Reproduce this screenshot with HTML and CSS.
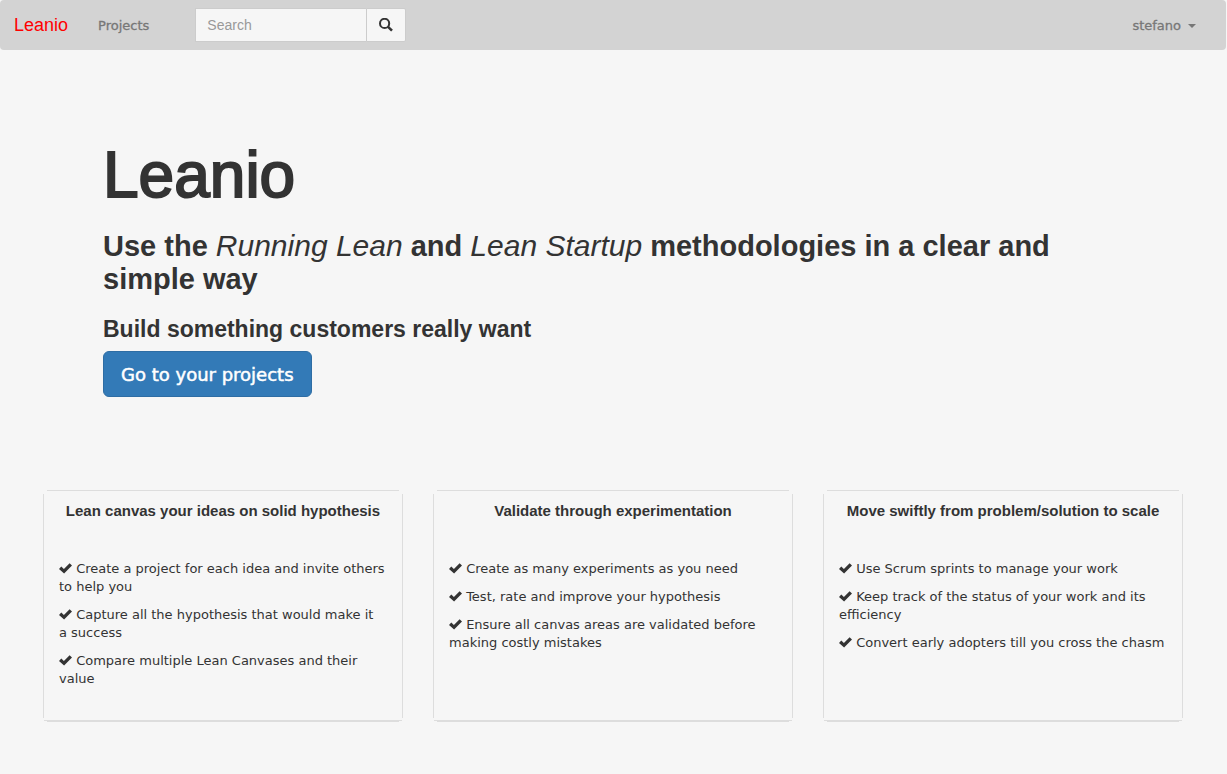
FILE: index.html
```html
<!DOCTYPE html>
<html lang="en">
<head>
<meta charset="utf-8">
<meta name="viewport" content="width=device-width, initial-scale=1">
<title>Leanio</title>
<link rel="stylesheet" href="styles.css">
</head>
<body>
<svg class="sprite" aria-hidden="true">
  <symbol id="check" viewBox="0 0 13 13"><path d="M0 6.9 2.3 4.6 4.9 6.9 10.6 1.2 13 3.4 5.1 11.5Z"/></symbol>
</svg>
<nav class="navbar">
  <a class="brand" href="#">Leanio</a>
  <a class="nav-link" href="#">Projects</a>
  <form class="search" role="search">
    <input class="search-input" type="text" placeholder="Search" aria-label="Search">
    <button class="search-button" type="submit" aria-label="Submit search">
      <svg class="search-icon" viewBox="0 0 14 14"><circle cx="5.6" cy="5.4" r="4.6" fill="none" stroke="#333" stroke-width="2"/><path d="M8.8 8.6 13 12.6" stroke="#333" stroke-width="2.6"/></svg>
    </button>
  </form>
  <a class="nav-link user" href="#">stefano<span class="caret"></span></a>
</nav>
<main class="container">
  <section class="hero">
    <h1>Leanio</h1>
    <h2>Use the <em>Running Lean</em> and <em>Lean Startup</em> methodologies in a clear and simple way</h2>
    <h3>Build something customers really want</h3>
    <a class="cta" href="#">Go to your projects</a>
  </section>
  <section class="cards">
    <article class="card">
      <h4>Lean canvas your ideas on solid hypothesis</h4>
      <p><svg class="check"><use href="#check"/></svg> Create a project for each idea and invite others to help you</p>
      <p><svg class="check"><use href="#check"/></svg> Capture all the hypothesis that would make it a&nbsp;success</p>
      <p><svg class="check"><use href="#check"/></svg> Compare multiple Lean Canvases and their value</p>
    </article>
    <article class="card">
      <h4>Validate through experimentation</h4>
      <p><svg class="check"><use href="#check"/></svg> Create as many experiments as you need</p>
      <p><svg class="check"><use href="#check"/></svg> Test, rate and improve your hypothesis</p>
      <p><svg class="check"><use href="#check"/></svg> Ensure all canvas areas are validated before making costly mistakes</p>
    </article>
    <article class="card">
      <h4>Move swiftly from problem/solution to scale</h4>
      <p><svg class="check"><use href="#check"/></svg> Use Scrum sprints to manage your work</p>
      <p><svg class="check"><use href="#check"/></svg> Keep track of the status of your work and its efficiency</p>
      <p><svg class="check"><use href="#check"/></svg> Convert early adopters till you cross the chasm</p>
    </article>
  </section>
</main>
</body>
</html>
```
FILE: styles.css
```css
* { box-sizing: border-box; }
body {
  margin: 0;
  background: #f6f6f6;
  color: #333;
  font: 13px/18px Verdana, "DejaVu Sans", sans-serif;
}
a { text-decoration: none; }
.sprite { position: absolute; width: 0; height: 0; }
.navbar {
  display: flex;
  align-items: center;
  height: 50px;
  margin-right: 1px;
  padding: 0 30px 0 14px;
  background: #d3d3d3;
  border-radius: 4px;
}
.brand {
  margin-right: 30px;
  color: #f00;
  font: 18px/20px "Liberation Sans", Arial, sans-serif;
}
.nav-link { padding-top: 2px; color: #777; -webkit-text-stroke: 0.3px #777; }
.search { display: flex; margin-left: 46px; }
.search-input {
  width: 171px;
  height: 34px;
  padding: 6px 11px;
  border: 1px solid #ccc;
  border-right: 0;
  border-radius: 0;
  background: #f6f6f6;
  color: #555;
  font: 14px/20px "Liberation Sans", Arial, sans-serif;
}
.search-input::placeholder { color: #999; opacity: 1; }
.search-button {
  display: flex;
  align-items: center;
  justify-content: center;
  width: 40px;
  height: 34px;
  padding: 0 1px 0 0;
  border: 1px solid #ccc;
  border-radius: 0 2px 2px 0;
  background: #f6f6f6;
}
.search-icon { width: 14px; height: 14px; }
.user { display: flex; align-items: center; gap: 7px; margin-left: auto; }
.caret {
  border-top: 4px solid #777;
  border-right: 4px solid transparent;
  border-left: 4px solid transparent;
}
.container { max-width: 1171px; margin: 0 auto; padding: 0 16px 0 15px; }
.hero { padding: 91px 60px 93px; }
h1, h2, h3, h4 {
  margin: 0;
  font-family: "Liberation Sans", Arial, sans-serif;
  font-weight: 700;
}
h1 {
  font-size: 64px;
  font-weight: 400;
  line-height: 69px;
  -webkit-text-stroke: 2px #333;
}
h2 { margin-top: 19px; font-size: 29px; line-height: 33px; }
h2 em { font-size: 30px; font-weight: 400; }
h3 { margin: 20px 0 9px; font-size: 23px; line-height: 26px; }
.cta {
  display: inline-block;
  padding: 11px 17px 9px;
  border: 1px solid #2e6da4;
  border-radius: 6px;
  background: #337ab7;
  color: #fff;
  font-size: 18px;
  line-height: 24px;
  -webkit-text-stroke: 0.5px #fff;
}
.cards {
  display: grid;
  grid-template-columns: repeat(3, 1fr);
  gap: 30px;
}
/* Four separate edges that stop short of the corners */
.card {
  min-height: 232px;
  padding: 12px 16px;
  background:
    linear-gradient(#ddd, #ddd) center top / calc(100% - 8px) 1px no-repeat,
    linear-gradient(#ddd, #ddd) left 0 top 4px / 1px calc(100% - 8px) no-repeat,
    linear-gradient(#ddd, #ddd) right 0 top 4px / 1px calc(100% - 8px) no-repeat,
    linear-gradient(#ddd, #ddd) center bottom 1px / calc(100% - 2px) 1px no-repeat,
    linear-gradient(#ddd, #ddd) center bottom / calc(100% - 8px) 1px no-repeat;
}
.card h4 {
  margin-bottom: 40px;
  font-size: 15px;
  line-height: 18px;
  text-align: center;
}
.card p { margin: 0 0 10px; }
.check { width: 13px; height: 13px; fill: #333; vertical-align: -2px; }
```
